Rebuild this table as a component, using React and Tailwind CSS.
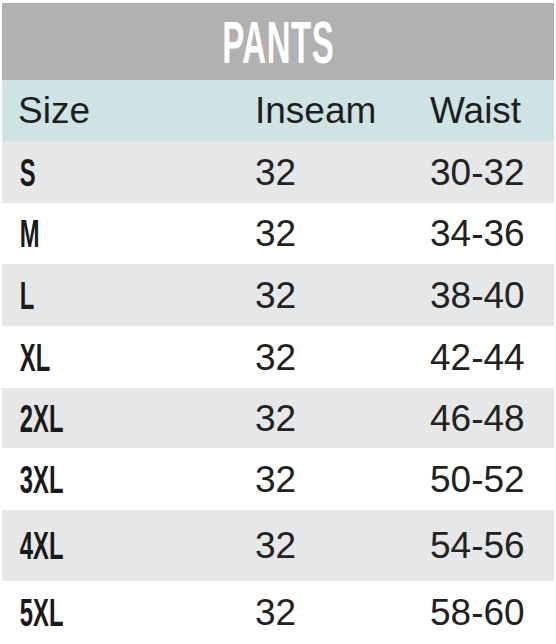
import React from "react";

const ROWS = [
  { size: "S", inseam: "32", waist: "30-32", h: "h-[62px]" },
  { size: "M", inseam: "32", waist: "34-36", h: "h-[61px]" },
  { size: "L", inseam: "32", waist: "38-40", h: "h-[62px]" },
  { size: "XL", inseam: "32", waist: "42-44", h: "h-[62px]" },
  { size: "2XL", inseam: "32", waist: "46-48", h: "h-[60px]" },
  { size: "3XL", inseam: "32", waist: "50-52", h: "h-[62px]" },
  { size: "4XL", inseam: "32", waist: "54-56", h: "h-[71px]" },
  { size: "5XL", inseam: "32", waist: "58-60", h: "h-[63px]" },
];

const sans = "font-['Liberation_Sans',Arial,sans-serif]";

export default function App() {
  return (
    <div className={`min-h-screen bg-white px-[2px] pt-[3px] ${sans}`}>
      {/* title bar */}
      <div className="h-[77px] bg-[#b1b1b1] flex items-center justify-center">
        <span className="inline-block text-white font-bold text-[59px] leading-none scale-x-[0.56] tracking-[1px] translate-y-[2px]">
          PANTS
        </span>
      </div>

      {/* column headings */}
      <div className="h-[61px] bg-[#cde3e4] grid grid-cols-[237px_175px_1fr] items-center pl-4 text-[37px] text-[#1e1e1e] leading-none">
        <span>Size</span>
        <span>Inseam</span>
        <span>Waist</span>
      </div>

      {ROWS.map((r, i) => (
        <div
          key={r.size}
          className={`${r.h} grid grid-cols-[237px_175px_1fr] items-center pl-4 text-[37px] text-[#222] leading-none ${
            i % 2 === 0 ? "bg-[#e6e7e8]" : "bg-white"
          }`}
        >
          <span className="inline-block origin-left scale-x-[0.61] font-bold text-[39px] text-[#1a1a1a] pl-[3px]">
            {r.size}
          </span>
          <span>{r.inseam}</span>
          <span>{r.waist}</span>
        </div>
      ))}
    </div>
  );
}
